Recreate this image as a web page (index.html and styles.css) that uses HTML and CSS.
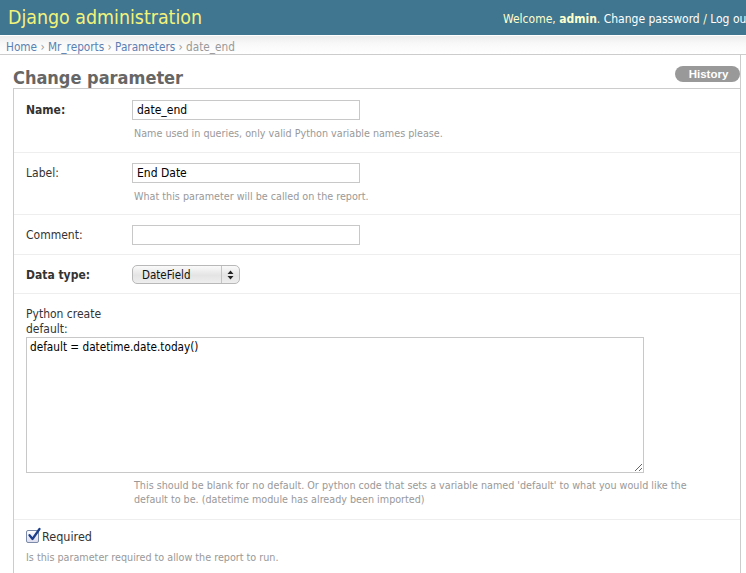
FILE: index.html
```html
<!DOCTYPE html>
<html>
<head>
<meta charset="utf-8">
<link rel="stylesheet" href="styles.css">
</head>
<body>
<div class="page">
  <div class="header">
    <h1 class="branding">Django administration</h1>
    <div class="user-tools">Welcome, <strong>admin</strong>. <a href="#">Change password</a> / <a href="#">Log out</a></div>
  </div>
  <div class="breadcrumbs"><a href="#">Home</a> › <a href="#">Mr_reports</a> › <a href="#">Parameters</a> › date_end</div>
  <div class="content">
    <div class="title-row">
      <h1 class="title">Change parameter</h1>
      <a class="history" href="#">History</a>
    </div>
    <div class="fieldset">
      <div class="form-row with-help first">
        <div class="field">
          <label class="required">Name:</label>
          <input class="text" type="text" value="date_end">
        </div>
        <p class="help">Name used in queries, only valid Python variable names please.</p>
      </div>
      <div class="form-row with-help">
        <div class="field">
          <label>Label:</label>
          <input class="text" type="text" value="End Date">
        </div>
        <p class="help">What this parameter will be called on the report.</p>
      </div>
      <div class="form-row">
        <div class="field">
          <label>Comment:</label>
          <input class="text" type="text" value="">
        </div>
      </div>
      <div class="form-row">
        <div class="field">
          <label class="required">Data type:</label>
          <div class="select"><span>DateField</span><span class="sel-arrows"><svg width="7" height="10" viewBox="0 0 7 10"><path d="M3.5 0.5 L6.5 4 L0.5 4 Z M0.5 6 L6.5 6 L3.5 9.5 Z" fill="#222"/></svg></span></div>
        </div>
      </div>
      <div class="form-row with-help">
        <label class="stacked">Python create<br>default:</label>
        <textarea class="code">default = datetime.date.today()</textarea>
        <p class="help wide">This should be blank for no default. Or python code that sets a variable named 'default' to what you would like the default to be. (datetime module has already been imported)</p>
      </div>
      <div class="form-row check-row">
        <div class="check-line">
          <span class="checkbox"><svg width="14" height="15" viewBox="0 0 14 15"><path d="M2.5 8.2 L5.5 12 L12.5 2" fill="none" stroke="#1b3f8c" stroke-width="2.2" stroke-linecap="round" stroke-linejoin="round"/></svg></span>
          <label class="vcheck">Required</label>
        </div>
        <p class="help plain">Is this parameter required to allow the report to run.</p>
      </div>
    </div>
  </div>
</div>
</body>
</html>
```

FILE: styles.css
```css
html, body {
  margin: 0;
  padding: 0;
  overflow: hidden;
  background: #fff;
}
body {
  font-family: "DejaVu Sans Condensed", "DejaVu Sans", sans-serif;
  font-size: 12px;
  color: #333;
}
.page {
  width: 800px;
}
.header {
  background: #417690;
  height: 35px;
  display: flex;
  align-items: center;
  white-space: nowrap;
}
.branding {
  margin: 0;
  padding: 0 0 1px 8px;
  width: 495px;
  font-size: 19.4px;
  font-weight: normal;
  color: #f4f379;
}
.user-tools {
  font-size: 12px;
  color: #ffc;
  padding-top: 3px;
}
.user-tools strong {
  font-weight: bold;
}
.user-tools a {
  color: #fff;
  text-decoration: none;
}
.breadcrumbs {
  box-sizing: border-box;
  height: 20px;
  line-height: 17px;
  padding: 3px 6px 0 6px;
  font-size: 11.7px;
  color: #999;
  border-top: 1px solid #fff;
  background: linear-gradient(#ececec 0%, #f8f8f8 40%, #fff 100%);
  border-bottom: 1px solid #ccc;
  width: 746px;
}
.breadcrumbs a {
  color: #5b80b2;
  text-decoration: none;
}
.content {
  width: 727px;
  padding-left: 13px;
  border-right: 1px solid #ccc;
  height: 520px;
}
.title-row {
  display: flex;
  align-items: flex-end;
  justify-content: space-between;
  height: 33px;
}
.title {
  margin: 0;
  font-size: 18px;
  font-weight: bold;
  color: #666;
}
.history {
  font-family: "Liberation Sans", Arial, sans-serif;
  font-weight: bold;
  font-size: 11.5px;
  color: #fff;
  background: #999;
  border-radius: 8px;
  height: 16px;
  line-height: 16px;
  width: 65px;
  text-align: center;
  text-decoration: none;
  margin-bottom: 6px;
  text-indent: 2px;
}
.fieldset {
  border-top: 1px solid #ccc;
  border-left: 1px solid #ccc;
}
.form-row {
  padding: 10px 12px 9px 12px;
  border-bottom: 1px solid #eee;
  font-size: 12px;
}
.form-row.with-help {
  padding-bottom: 8px;
}
.form-row.first {
  padding-top: 11px;
  padding-bottom: 9px;
}
.field {
  display: flex;
  align-items: flex-start;
}
.field label {
  width: 106px;
  flex: none;
  padding-top: 3px;
  color: #333;
}
label.required {
  font-weight: bold;
}
input.text {
  box-sizing: border-box;
  width: 228px;
  height: 20px;
  margin: 0;
  border: 1px solid #c8c8c8;
  font-family: inherit;
  font-size: 12px;
  padding: 1px 4px;
  color: #000;
}
.help {
  margin: 7px 0 2px 108px;
  font-size: 10.7px;
  color: #999;
  line-height: 14px;
}
.help.wide {
  max-width: 570px;
  margin-top: 6px;
  margin-bottom: 4px;
}
.select {
  box-sizing: border-box;
  width: 108px;
  height: 19px;
  margin-top: 0;
  border: 1px solid #b8b8b8;
  border-radius: 5px;
  background: linear-gradient(#fafafa, #e4e4e4 55%, #eee);
  display: flex;
  align-items: center;
  font-size: 11.5px;
  color: #111;
}
.select span:first-child {
  flex: 1;
  padding-left: 9px;
}
.sel-arrows {
  width: 17px;
  height: 100%;
  border-left: 1px solid #c4c4c4;
  display: flex;
  align-items: center;
  justify-content: center;
}
.stacked {
  display: block;
  color: #333;
  line-height: 15px;
  margin-top: 3px;
}
textarea.code {
  display: block;
  box-sizing: border-box;
  width: 618px;
  height: 136px;
  margin: 0;
  border: 1px solid #c8c8c8;
  font-family: inherit;
  font-size: 11.7px;
  color: #000;
  padding: 2px 3px;
  resize: both;
}
.form-row.check-row {
  padding-top: 7px;
  border-bottom: none;
}
.check-line {
  display: flex;
  align-items: center;
  height: 18px;
}
.checkbox {
  box-sizing: border-box;
  width: 13px;
  height: 13px;
  border: 1px solid #7a8aa8;
  border-radius: 2px;
  background: linear-gradient(#fff, #dde);
  position: relative;
  margin-right: 3px;
}
.checkbox svg {
  position: absolute;
  left: 0;
  top: -4px;
}
.vcheck {
  font-size: 12.5px;
  color: #333;
}
.help.plain {
  margin: 6px 0 0 0;
}
```
